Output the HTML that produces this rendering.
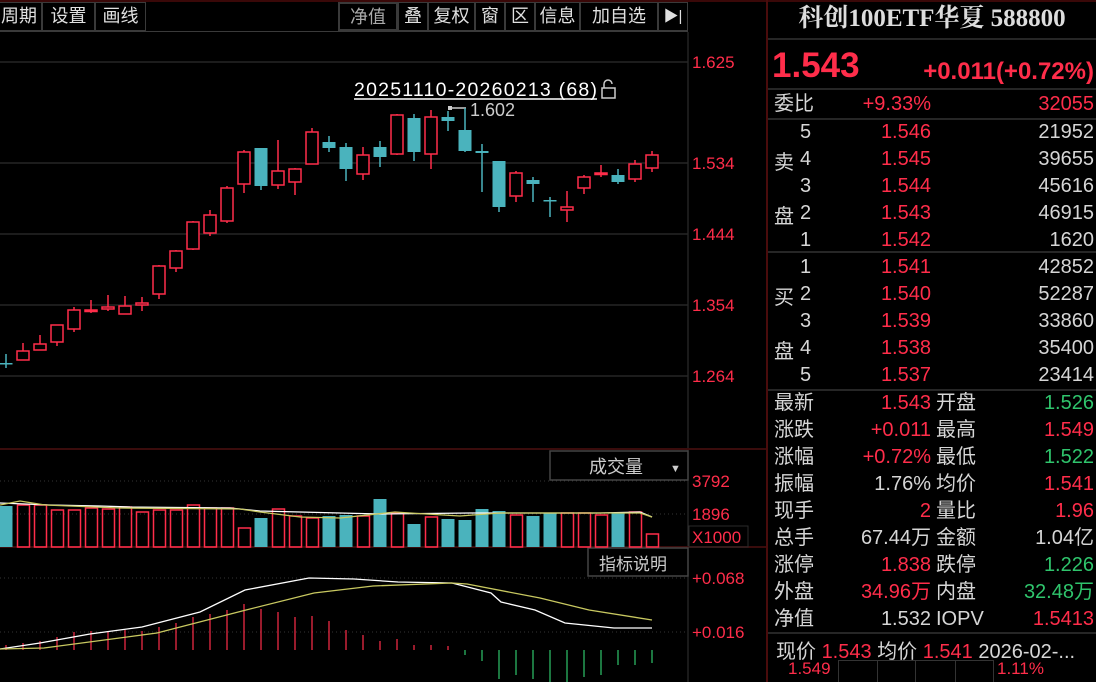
<!DOCTYPE html>
<html><head><meta charset="utf-8">
<style>
*{margin:0;padding:0;box-sizing:border-box}
body{width:1096px;height:682px;background:#000;overflow:hidden;position:relative;font-family:"Liberation Sans","Noto Sans CJK SC",sans-serif;color:#d6d6d6}
.a{position:absolute;white-space:nowrap}
.btn{position:absolute;top:2px;height:29px;border:1px solid #3a3a3a;font-size:18px;line-height:27px;text-align:center;color:#e0e0e0}
.r{color:#ff2d4a}.g{color:#2fc46c}.w{color:#d6d6d6}
.rp{position:absolute;left:766px;top:0;width:330px;height:682px;border-left:2px solid #4a0c0c;font-size:20px}
.row{position:absolute;left:6px;width:320px;height:27px;line-height:27px}
.row span{position:absolute}
.hl{position:absolute;left:0;width:330px;height:2px;background:#262626}
</style></head><body>
<div class="a" style="left:0;top:0;width:1096px;height:2px;background:#3a0808"></div>
<div class="a" style="left:0;top:31px;width:688px;height:1px;background:#3a3a3a"></div>
<div class="btn" style="left:-4px;width:46px">周期</div>
<div class="btn" style="left:42px;width:53px">设置</div>
<div class="btn" style="left:95px;width:51px">画线</div>
<div class="btn" style="left:338px;width:60px;color:#aaa;border-width:2px">净值</div>
<div class="btn" style="left:398px;width:30px">叠</div>
<div class="btn" style="left:428px;width:47px">复权</div>
<div class="btn" style="left:475px;width:30px">窗</div>
<div class="btn" style="left:505px;width:30px">区</div>
<div class="btn" style="left:535px;width:45px">信息</div>
<div class="btn" style="left:580px;width:78px">加自选</div>
<div class="btn" style="left:658px;width:30px;font-size:15px">▶|</div>

<svg class="a" style="left:0;top:0" width="766" height="682" id="ch">
<line x1="688" y1="32" x2="688" y2="682" stroke="#333" stroke-width="1"/>
<g stroke="#262626" stroke-width="1.5">
<line x1="0" y1="62" x2="688" y2="62"/><line x1="0" y1="163" x2="688" y2="163"/><line x1="0" y1="234" x2="688" y2="234"/><line x1="0" y1="305" x2="688" y2="305"/><line x1="0" y1="376" x2="688" y2="376"/>
</g>
<line x1="0" y1="449" x2="766" y2="449" stroke="#3a0c0c" stroke-width="2"/>
<line x1="0" y1="547" x2="766" y2="547" stroke="#3a0c0c" stroke-width="2"/>
<g stroke="#333" stroke-dasharray="1,3"><line x1="0" y1="481" x2="688" y2="481"/><line x1="0" y1="514" x2="688" y2="514"/><line x1="0" y1="578" x2="688" y2="578"/><line x1="0" y1="632" x2="688" y2="632"/></g>
<g fill="#ff2d4a" font-size="17" font-family="Liberation Sans,sans-serif">
<text x="692" y="68">1.625</text><text x="692" y="169">1.534</text><text x="692" y="240">1.444</text><text x="692" y="311">1.354</text><text x="692" y="382">1.264</text>
<text x="692" y="487">3792</text><text x="692" y="520">1896</text><text x="692" y="543">X1000</text>
<text x="692" y="584">+0.068</text><text x="692" y="638">+0.016</text>
</g>
<rect x="689" y="526" width="59" height="21" fill="none" stroke="#2a2a2a"/>
<rect x="550" y="451" width="138" height="29" fill="none" stroke="#444" stroke-width="1.5"/>
<text x="589" y="473" fill="#ccc" font-size="18" font-family="Noto Sans CJK SC,sans-serif">成交量</text>
<text x="670" y="472" fill="#ccc" font-size="11">▼</text>
<rect x="588" y="548" width="100" height="28" fill="none" stroke="#444" stroke-width="1.5"/>
<text x="599" y="570" fill="#ccc" font-size="17" font-family="Noto Sans CJK SC,sans-serif">指标说明</text>
<text x="354" y="96" fill="#fff" font-size="19.5" font-family="Liberation Sans,sans-serif" textLength="243">20251110-20260213 (68)</text>
<line x1="354" y1="99" x2="597" y2="99" stroke="#fff" stroke-width="1.5"/>
<rect x="602" y="88" width="13" height="10" fill="none" stroke="#ccc" stroke-width="1.5"/>
<path d="M604 88 V84 a4 4 0 0 1 8 0" fill="none" stroke="#ccc" stroke-width="1.5"/>
<path d="M449 108 H466" stroke="#ccc" stroke-width="1.5"/><rect x="448" y="106" width="4" height="4" fill="#ccc"/>
<text x="470" y="116" fill="#ccc" font-size="18">1.602</text>
<g id="k"></g>
</svg>

<div class="rp">
<div class="a" style="left:0;top:0;width:328px;height:38px;line-height:38px;text-align:center;font-family:'Liberation Serif','Noto Serif CJK SC',serif;font-weight:bold;font-size:25px;color:#ddd">科创100ETF华夏 588800</div>
<div class="hl" style="top:38px"></div>
<div class="a r" style="left:4px;top:46px;font-size:35px;font-weight:bold">1.543</div>
<div class="a r" style="right:2px;top:58px;font-size:24px;font-weight:bold">+0.011(+0.72%)</div>
<div class="hl" style="top:88px"></div>
<div class="row" style="top:91px"><span>委比</span><span class="r" style="right:163px">+9.33%</span><span class="r" style="right:0">32055</span></div>
<div class="hl" style="top:118px"></div>
<div class="a" style="left:6px;top:146px">卖</div><div class="a" style="left:6px;top:200px">盘</div>
<div class="row" style="top:119px"><span style="left:26px">5</span><span class="r" style="right:163px">1.546</span><span style="right:0">21952</span></div>
<div class="row" style="top:146px"><span style="left:26px">4</span><span class="r" style="right:163px">1.545</span><span style="right:0">39655</span></div>
<div class="row" style="top:173px"><span style="left:26px">3</span><span class="r" style="right:163px">1.544</span><span style="right:0">45616</span></div>
<div class="row" style="top:200px"><span style="left:26px">2</span><span class="r" style="right:163px">1.543</span><span style="right:0">46915</span></div>
<div class="row" style="top:227px"><span style="left:26px">1</span><span class="r" style="right:163px">1.542</span><span style="right:0">1620</span></div>
<div class="hl" style="top:251px"></div>
<div class="a" style="left:6px;top:281px">买</div><div class="a" style="left:6px;top:335px">盘</div>
<div class="row" style="top:254px"><span style="left:26px">1</span><span class="r" style="right:163px">1.541</span><span style="right:0">42852</span></div>
<div class="row" style="top:281px"><span style="left:26px">2</span><span class="r" style="right:163px">1.540</span><span style="right:0">52287</span></div>
<div class="row" style="top:308px"><span style="left:26px">3</span><span class="r" style="right:163px">1.539</span><span style="right:0">33860</span></div>
<div class="row" style="top:335px"><span style="left:26px">4</span><span class="r" style="right:163px">1.538</span><span style="right:0">35400</span></div>
<div class="row" style="top:362px"><span style="left:26px">5</span><span class="r" style="right:163px">1.537</span><span style="right:0">23414</span></div>
<div class="hl" style="top:389px"></div>
<div class="row" style="top:390px"><span>最新</span><span class="r" style="right:163px">1.543</span><span style="left:162px">开盘</span><span class="g" style="right:0">1.526</span></div>
<div class="row" style="top:417px"><span>涨跌</span><span class="r" style="right:163px">+0.011</span><span style="left:162px">最高</span><span class="r" style="right:0">1.549</span></div>
<div class="row" style="top:444px"><span>涨幅</span><span class="r" style="right:163px">+0.72%</span><span style="left:162px">最低</span><span class="g" style="right:0">1.522</span></div>
<div class="row" style="top:471px"><span>振幅</span><span style="right:163px">1.76%</span><span style="left:162px">均价</span><span class="r" style="right:0">1.541</span></div>
<div class="row" style="top:498px"><span>现手</span><span class="r" style="right:163px">2</span><span style="left:162px">量比</span><span class="r" style="right:0">1.96</span></div>
<div class="row" style="top:525px"><span>总手</span><span style="right:163px">67.44万</span><span style="left:162px">金额</span><span style="right:0">1.04亿</span></div>
<div class="row" style="top:552px"><span>涨停</span><span class="r" style="right:163px">1.838</span><span style="left:162px">跌停</span><span class="g" style="right:0">1.226</span></div>
<div class="row" style="top:579px"><span>外盘</span><span class="r" style="right:163px">34.96万</span><span style="left:162px">内盘</span><span class="g" style="right:0">32.48万</span></div>
<div class="row" style="top:606px"><span>净值</span><span style="right:163px">1.532</span><span style="left:162px">IOPV</span><span class="r" style="right:0">1.5413</span></div>
<div class="hl" style="top:632px"></div>
<div class="a" style="left:8px;top:635px;font-size:20px">现价 <span class="r">1.543</span> 均价 <span class="r">1.541</span> 2026-02-...</div>
<div class="a r" style="left:20px;top:659px;font-size:17px">1.549</div>
<div class="a r" style="left:229px;top:659px;font-size:17px">1.11%</div>
<div class="a" style="left:70px;top:660px;width:156px;height:22px;border:1px solid #333;border-bottom:none"></div>
<div class="a" style="left:109px;top:660px;width:39px;height:22px;border-left:1px solid #333;border-right:1px solid #333"></div>
<div class="a" style="left:187px;top:660px;width:1px;height:22px;background:#333"></div>
</div>

<script>
var R="#ff2d4a",T="#4ab3bd",G="#2fc46c";
var K=[["t",363,364,354,368],["r",351,360,343,360],["r",344,350,335,350],["r",325,342,325,346],["r",310,329,307,332],["r",310,311,300,313],["r",307,309,295,311],["r",306,314,296,314],["r",303,305,297,311],["r",266,294,265,299],["r",251,268,250,272],["r",222,249,221,250],["r",215,233,210,236],["r",188,221,186,223],["r",152,184,150,193],["t",148,186,148,190],["r",171,185,140,189],["r",169,182,168,195],["r",132,164,128,164],["t",142,148,136,152],["t",147,169,143,181],["r",155,174,147,180],["t",147,157,141,167],["r",115,154,114,155],["t",118,152,114,161],["r",117,154,110,169],["t",117,121,111,131],["t",130,151,108,152],["t",151,153,144,192],["t",161,207,161,212],["r",173,196,171,202],["t",180,184,177,202],["t",200,201,197,217],["r",207,210,191,222],["r",177,188,175,194],["r",173,174,165,177],["t",175,182,169,184],["r",164,179,160,182],["r",155,168,151,172]];
var V=[506,505,505,510,510,508,509,507,512,510,510,505,508,508,528,518,509,516,518,516,515,516,499,513,524,517,519,520,509,511,515,516,513,513,513,515,513,512,534];
var M=[645,643,641,637,632,631,631,630,631,627,623,617,614,610,604,609,612,617,616,621,630,635,641,639,645,645,646,655,661,679,675,679,682,682,677,675,665,665,663];
var s="";
K.forEach(function(c,i){var x=6+17*i,col=c[0]=="r"?R:T;
s+='<line x1="'+x+'" y1="'+c[3]+'" x2="'+x+'" y2="'+c[4]+'" stroke="'+col+'" stroke-width="1.5"/>';
var h=Math.max(c[2]-c[1],1.5);
if(c[0]=="r")s+='<rect x="'+(x-6)+'" y="'+c[1]+'" width="12" height="'+h+'" fill="#000" stroke="'+col+'" stroke-width="1.5"/>';
else s+='<rect x="'+(x-6.5)+'" y="'+c[1]+'" width="13" height="'+h+'" fill="'+col+'"/>';
var v=V[i];
if(c[0]=="r")s+='<rect x="'+(x-5.5)+'" y="'+v+'" width="12" height="'+(547-v)+'" fill="none" stroke="'+col+'" stroke-width="1.5"/>';
else s+='<rect x="'+(x-6.5)+'" y="'+v+'" width="13" height="'+(547-v)+'" fill="'+col+'"/>';
var m=M[i];
if(m<650)s+='<line x1="'+x+'" y1="'+m+'" x2="'+x+'" y2="650" stroke="'+R+'" stroke-width="1.2"/>';
else s+='<line x1="'+x+'" y1="650" x2="'+x+'" y2="'+m+'" stroke="'+G+'" stroke-width="1.2"/>';
});
s+='<polyline fill="none" stroke="#fff" stroke-width="1.3" points="0,503 50,505 100,506 130,507 230,508 260,511 300,512 380,514 470,513 520,513 600,513 640,512 652,517"/>';
s+='<polyline fill="none" stroke="#c8c860" stroke-width="1.3" points="0,505 20,501 45,505 120,508 240,509 260,512 300,517 340,518 395,512 410,513 460,516 500,513 600,513 640,513 652,517"/>';
s+='<polyline fill="none" stroke="#fff" stroke-width="1.3" points="0,649 40,643 90,634 142,627 200,612 245,590 309,578 354,579 398,582 452,583 491,593 501,602 535,610 565,623 614,628 652,628"/>';
s+='<polyline fill="none" stroke="#c8c860" stroke-width="1.3" points="0,649 44,648 157,633 246,610 314,593 373,586 452,583 467,584 540,598 589,610 652,620"/>';
document.getElementById("k").innerHTML=s;
</script>
</body></html>
